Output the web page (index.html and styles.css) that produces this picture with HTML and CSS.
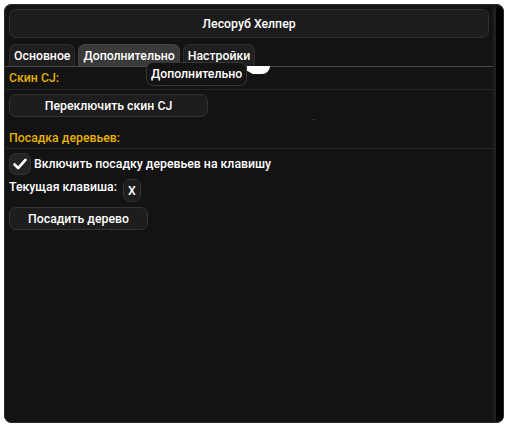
FILE: index.html
```html
<!DOCTYPE html>
<html lang="ru">
<head>
<meta charset="utf-8">
<title>Лесоруб Хелпер</title>
<link rel="stylesheet" href="styles.css">
</head>
<body>
<div class="window">
  <div class="content">
    <div class="title">Лесоруб Хелпер</div>
    <div class="tabs">
      <div class="tab">Основное</div>
      <div class="tab active">Дополнительно</div>
      <div class="tab">Настройки</div>
    </div>
    <div class="section">
      <div class="heading">Скин CJ:</div>
    </div>
    <div class="sep"></div>
    <div class="section">
      <button class="btn btn-skin">Переключить скин CJ</button>
    </div>
    <div class="section sec2">
      <div class="heading">Посадка деревьев:</div>
    </div>
    <div class="sep"></div>
    <div class="section">
      <label class="check-row">
        <span class="checkbox"><svg viewBox="0 0 22 22" width="22" height="22"><path d="M5 11.5 L9 15.5 L17 6.5" fill="none" stroke="#fff" stroke-width="3" stroke-linecap="round" stroke-linejoin="round"/></svg></span>
        <span class="text">Включить посадку деревьев на клавишу</span>
      </label>
      <div class="key-row">
        <span class="text key-label">Текущая клавиша:</span>
        <button class="btn btn-key">X</button>
      </div>
      <button class="btn btn-plant">Посадить дерево</button>
    </div>
    <div class="blob"></div>
    <div class="tooltip">Дополнительно</div>
    <div class="dot"></div>
  </div>
  <div class="scrollbar"></div>
</div>
</body>
</html>
```
FILE: styles.css
```css
html, body {
  margin: 0;
  padding: 0;
  background: #ffffff;
}
body {
  font-family: Roboto, "Open Sans", sans-serif;
  font-size: 12.3px;
  font-weight: 500;
  color: #ffffff;
}
.window {
  position: relative;
  margin: 4px;
  width: 500px;
  height: 419px;
  background: #131313;
  border-radius: 8px;
  display: flex;
  overflow: hidden;
  box-shadow: inset 0 0 0 1px #2a2a2a;
}
.content {
  position: relative;
  flex: 1;
  padding: 5px 0 0 0;
}
.scrollbar {
  width: 7px;
  margin-right: 1px;
  margin-top: 3px;
  margin-bottom: 2px;
  background: #000;
  border-left: 3px solid #1f1f1f;
  border-top-right-radius: 4px;
}
.title {
  margin-left: 5px;
  width: 478px;
  height: 27px;
  border: 1px solid #303030;
  border-radius: 7px;
  background: #1c1c1c;
  display: flex;
  align-items: center;
  justify-content: center;
}
.tabs {
  margin-top: 6px;
  padding-left: 5px;
  display: flex;
  gap: 3px;
  border-bottom: 1px solid #4a4a4a;
  height: 22px;
}
.tab {
  height: 21px;
  padding: 0 4px;
  border: 1px solid #2e2e2e;
  border-bottom: none;
  border-radius: 7px 7px 0 0;
  background: #1f1f1f;
  display: flex;
  align-items: center;
}
.tab.active {
  background: #3a3a3a;
  border-color: #444;
}
.section {
  padding-left: 5px;
}
.heading {
  color: #e6b000;
  height: 22px;
  display: flex;
  align-items: center;
}
.sec2 {
  margin-top: 9px;
}
.sec2 .heading {
  height: 22px;
  padding-top: 2px;
  box-sizing: border-box;
}
.sep {
  height: 1px;
  background: #262626;
  margin: 0;
}
.btn {
  font: inherit;
  color: #fff;
  background: #1d1d1d;
  border: 1px solid #333;
  border-radius: 7px;
  padding: 0;
  display: flex;
  align-items: center;
  justify-content: center;
}
.btn-skin {
  margin-top: 4px;
  width: 199px;
  height: 23px;
}
.check-row {
  margin-top: 4px;
  display: flex;
  align-items: center;
  gap: 3px;
}
.checkbox {
  width: 22px;
  height: 22px;
  border-radius: 7px;
  background: #232323;
  border: 1px solid #333;
  box-sizing: border-box;
  display: flex;
  align-items: center;
  justify-content: center;
}
.checkbox svg {
  display: block;
}
.key-row {
  margin-top: 4px;
  display: flex;
  align-items: flex-start;
  gap: 6px;
  height: 23px;
}
.key-label {
  margin-top: 1px;
}
.btn-key {
  width: 18px;
  height: 23px;
}
.btn-plant {
  margin-top: 5px;
  width: 139px;
  height: 23px;
}
.heading, .text {
  line-height: 14px;
}
.tooltip {
  position: absolute;
  left: 142px;
  top: 58px;
  height: 22px;
  padding: 0 4px;
  background: #141414;
  border: 1px solid #383838;
  border-radius: 7px;
  display: flex;
  align-items: center;
}
.blob {
  position: absolute;
  left: 243px;
  top: 62px;
  width: 23px;
  height: 8px;
  background: #fff;
  border-radius: 0 0 8px 3px;
  clip-path: polygon(0 0, 100% 0, 100% 40%, 85% 100%, 25% 100%, 0 60%);
}
.dot {
  position: absolute;
  left: 308px;
  top: 115px;
  width: 3px;
  height: 1px;
  background: #333;
}
```
